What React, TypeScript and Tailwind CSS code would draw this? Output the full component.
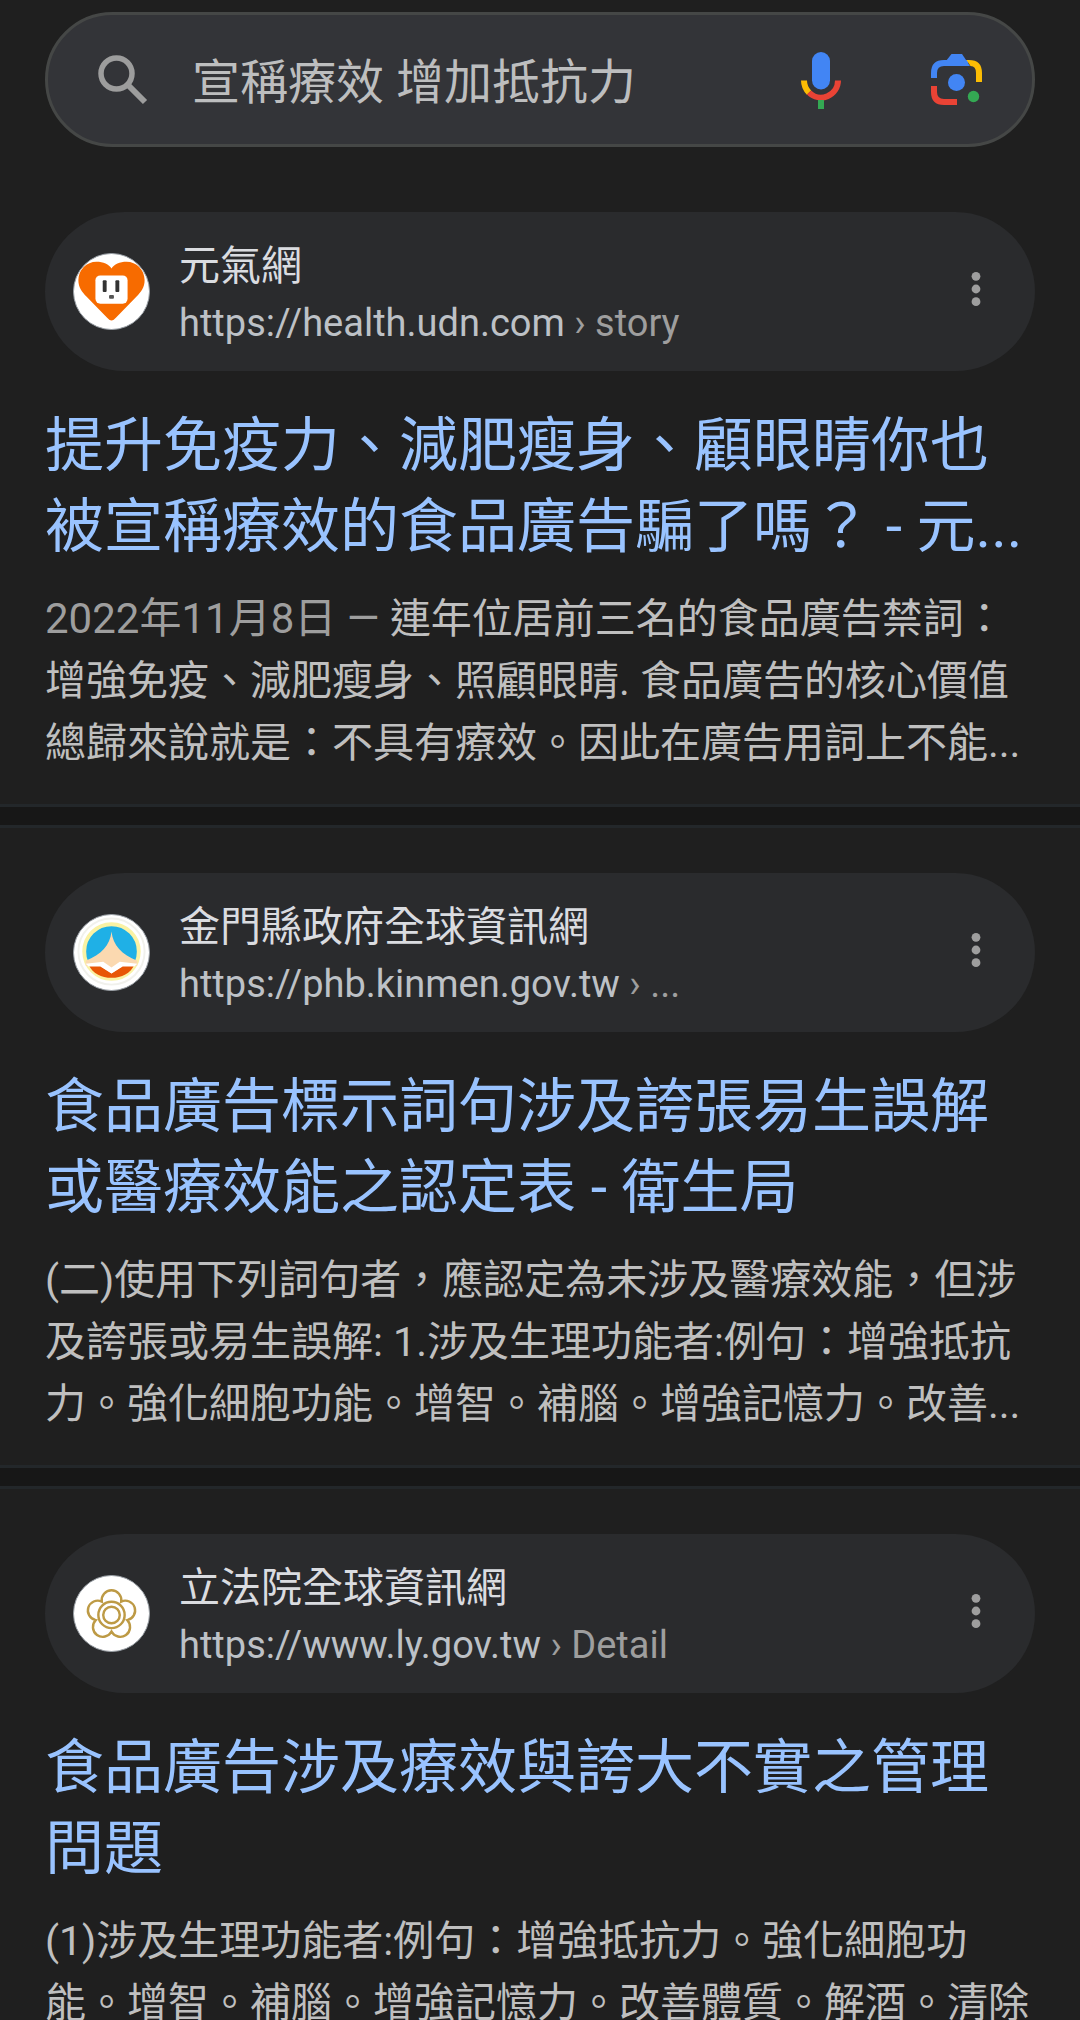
import React from "react";

type Result = {
  site: string;
  url: string;
  path: string;
  title: string[];
  date?: string;
  snippet: string[];
  icon: React.ReactNode;
};

const HeartIcon = () => (
  <svg viewBox="0 0 77 77" className="h-full w-full" aria-hidden="true">
    <path
      d="M38.5 15C41 10.500 47 8 54 8C64 8 72.500 16 72.500 27C72.500 34 69 39 64 44L43 65.500Q38.500 71 34 65.500L13 44C8 39 4.500 34 4.500 27C4.500 16 13 8 23 8C30 8 36 10.500 38.500 15Z"
      fill="#f76b00"
    />
    <rect x="22" y="22" width="33" height="29" rx="5" fill="#fff" />
    <rect x="29.5" y="27" width="4" height="12" rx="1" fill="#333" />
    <rect x="42.5" y="27" width="4" height="12" rx="1" fill="#333" />
    <rect x="36" y="42" width="5" height="4" rx="1" fill="#555" />
  </svg>
);

const KinmenIcon = () => (
  <svg viewBox="0 0 77 77" className="h-full w-full" aria-hidden="true">
    <circle cx="38.5" cy="37.5" r="34" fill="none" stroke="#f1f1ec" strokeWidth="2" />
    <circle cx="38.5" cy="37.5" r="28" fill="#1fb0e6" stroke="#faf2a4" strokeWidth="4" />
    <path d="M15 51H62C58 60 49 64.500 38.500 64.500C28 64.500 19 60 15 51Z" fill="#e85606" />
    <path d="M38.500 17C40 31 49 41 65 47V52H50L38.500 60L27 52H12V47C28 41 37 31 38.500 17Z" fill="#fbd9b0" />
    <path d="M12 50L30 48L38.500 54L47 48L65 50L62 53H50L38.500 60L27 53H15Z" fill="#fff" />
  </svg>
);

const PlumIcon = () => (
  <svg viewBox="0 0 77 77" className="h-full w-full" aria-hidden="true" fill="none" stroke="#bd9a45" strokeWidth="2.500">
    <path d="M28.500 26.200A10.100 10.100 0 1 1 48.500 26.200A10.100 10.100 0 1 1 54.700 45.300A10.100 10.100 0 1 1 38.500 57A10.100 10.100 0 1 1 22.300 45.300A10.100 10.100 0 1 1 28.500 26.200Z" />
    <circle cx="38.5" cy="40" r="13.500" />
    <circle cx="38.5" cy="40" r="8.500" />
  </svg>
);

const results: Result[] = [
  {
    site: "元氣網",
    url: "https://health.udn.com",
    path: "story",
    title: ["提升免疫力、減肥瘦身、顧眼睛你也", "被宣稱療效的食品廣告騙了嗎？ - 元..."],
    date: "2022年11月8日",
    snippet: [
      "連年位居前三名的食品廣告禁詞：",
      "增強免疫、減肥瘦身、照顧眼睛. 食品廣告的核心價值",
      "總歸來說就是：不具有療效。因此在廣告用詞上不能...",
    ],
    icon: <HeartIcon />,
  },
  {
    site: "金門縣政府全球資訊網",
    url: "https://phb.kinmen.gov.tw",
    path: "...",
    title: ["食品廣告標示詞句涉及誇張易生誤解", "或醫療效能之認定表 - 衛生局"],
    snippet: [
      "(二)使用下列詞句者，應認定為未涉及醫療效能，但涉",
      "及誇張或易生誤解: 1.涉及生理功能者:例句：增強抵抗",
      "力。強化細胞功能。增智。補腦。增強記憶力。改善...",
    ],
    icon: <KinmenIcon />,
  },
  {
    site: "立法院全球資訊網",
    url: "https://www.ly.gov.tw",
    path: "Detail",
    title: ["食品廣告涉及療效與誇大不實之管理", "問題"],
    snippet: [
      "(1)涉及生理功能者:例句：增強抵抗力。強化細胞功",
      "能。增智。補腦。增強記憶力。改善體質。解酒。清除",
    ],
    icon: <PlumIcon />,
  },
];

const SearchBar = () => (
  <form
    className="mx-[45px] flex h-[135px] items-center rounded-full border-3 border-[#454746] bg-[#333438] px-[50px]"
    onSubmit={(e) => e.preventDefault()}
  >
    <button type="submit" aria-label="搜尋" className="shrink-0">
      <svg viewBox="0 0 50 50" className="size-[50px]" fill="none" stroke="#9d9d9d">
        <circle cx="18.5" cy="18.5" r="15.500" strokeWidth="5.500" />
        <path d="M30 30L47 47" strokeWidth="6" />
      </svg>
    </button>
    <input
      type="text"
      aria-label="搜尋字詞"
      defaultValue="宣稱療效 增加抵抗力"
      className="ml-11 min-w-0 flex-1 bg-transparent pt-1.5 text-[48px] text-[#bdbebf] outline-none"
    />
    <button type="button" aria-label="語音搜尋" className="mr-[90px] shrink-0">
      <svg viewBox="0 0 40 58" className="h-[58px] w-[40px]">
        <rect x="11" y="1" width="18" height="37.500" rx="9" fill="#4285f4" />
        <path d="M3 29.500A17 17 0 0 0 8 41.500" fill="none" stroke="#fbbc04" strokeWidth="6" />
        <path d="M8 41.500A17 17 0 0 0 37 29.500" fill="none" stroke="#ea4335" strokeWidth="6" />
        <path d="M20 49V58" stroke="#34a853" strokeWidth="6" />
      </svg>
    </button>
    <button type="button" aria-label="以圖搜尋" className="shrink-0">
      <svg viewBox="0 0 51 51" className="size-[51px]" fill="none" strokeWidth="6">
        <path d="M3 24V19Q3 9 13 9H37" stroke="#4285f4" />
        <path d="M15 7L20.500 0H31L39 12H15Z" fill="#4285f4" />
        <path d="M35.500 6H38Q51 6 51 19V28H45V19Q45 12 39.500 12Z" fill="#fbbc04" />
        <path d="M3 32V38Q3 48 13 48H26" stroke="#ea4335" />
        <circle cx="25.5" cy="28.5" r="8.500" fill="#4285f4" />
        <circle cx="42.5" cy="42.5" r="5.700" fill="#34a853" />
      </svg>
    </button>
  </form>
);

const ResultItem = ({ item }: { item: Result }) => (
  <article className="px-[45px] pb-[30px] pt-[45px]">
    <div className="flex h-[159px] items-center rounded-full bg-[#2a2b2d] pl-7 pr-[41px]">
      <div className="size-[77px] shrink-0 overflow-hidden rounded-full border border-[#9aa0a6] bg-white">
        {item.icon}
      </div>
      <div className="ml-[29px] min-w-0 flex-1 pt-[3px]">
        <p className="truncate text-[41px] leading-[60px] text-[#dadce0]">{item.site}</p>
        <p className="truncate text-[38px] leading-[55px] text-[#bdc1c6]">
          {item.url}
          <span className="text-[#9e9e9e]"> › {item.path}</span>
        </p>
      </div>
      <button type="button" aria-label="更多選項" className="mb-1.5 flex h-16 w-9 shrink-0 items-center justify-center">
        <svg viewBox="0 0 10 36" className="h-9 w-[10px]" fill="#9e9e9e">
          <circle cx="5" cy="5.3" r="4.400" />
          <circle cx="5" cy="18" r="4.400" />
          <circle cx="5" cy="30.7" r="4.400" />
        </svg>
      </button>
    </div>
    <h3 className="mt-[34px] text-[59px] leading-[81px] text-[#99c3ff]">
      <a href="#">
        {item.title.map((line) => (
          <span key={line} className="block whitespace-nowrap">
            {line}
          </span>
        ))}
      </a>
    </h3>
    <p className="mt-[21px] text-[41px] leading-[62px] text-[#bfbfbf]">
      {item.snippet.map((line, i) => (
        <span key={line} className="block whitespace-nowrap">
          {i === 0 && item.date && <span className="text-[42px] text-[#9e9e9e]">{item.date} — </span>}
          {line}
        </span>
      ))}
    </p>
  </article>
);

const App = () => {
  return (
    <div
      lang="zh-Hant"
      className="min-h-screen bg-[#1f1f1f] font-[Roboto,'Noto_Sans_CJK_TC',sans-serif]"
    >
      <header className="pb-5 pt-3">
        <SearchBar />
      </header>
      <main>
        {results.map((item, i) => (
          <React.Fragment key={item.url}>
            {i > 0 && <div className="h-6 border-y-3 border-[#23272a] bg-[#171717]" />}
            <ResultItem item={item} />
          </React.Fragment>
        ))}
      </main>
    </div>
  );
};

export default App;
